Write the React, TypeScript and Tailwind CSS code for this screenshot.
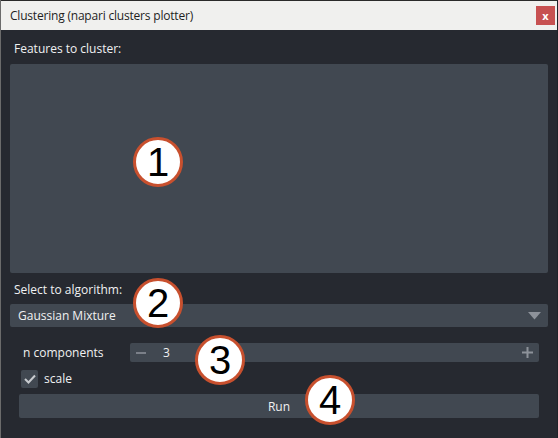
const font = "font-['Segoe_UI','Open_Sans','Noto_Sans',sans-serif]";

function Marker({ n, className }: { n: number; className: string }) {
  return (
    <div
      className={`absolute flex h-[50px] w-[50px] items-center justify-center rounded-full border-[3px] border-[#c8502e] bg-white text-[40px] leading-none text-black font-['Liberation_Sans',sans-serif] ${className}`}
    >
      {n}
    </div>
  );
}

export default function App() {
  return (
    <div className={`relative h-[438px] w-[558px] overflow-hidden bg-[#1f2228] ${font}`}>
      <div className="flex h-[438px] w-[557px] flex-col border-l border-[#6b6b6b]">
        <div className="flex h-[30px] items-center justify-between border-t border-[#2a2a2a] bg-[#f0f0ee] pl-[9px] pr-[2px]">
          <span className="text-[12px] tracking-[-0.2px] text-[#1e1e1e]">Clustering (napari clusters plotter)</span>
          <div className="flex h-[19px] w-[19px] items-center justify-center bg-[#c75151] text-[11px] font-bold leading-none text-white">
            x
          </div>
        </div>
        <div className="flex flex-1 flex-col bg-[#262930] px-[9px] text-[12px] text-[#f0f1f2]">
          <div className="pl-[4px] pt-[11px] leading-[16px]">Features to cluster:</div>
          <div className="mt-[7px] h-[209px] rounded-[2px] bg-[#414851]" />
          <div className="mt-[9px] pl-[4px] leading-[16px]">Select to algorithm:</div>
          <div className="mt-[6px] flex h-[23px] items-center justify-between rounded-[2px] bg-[#414851] pl-[8px] pr-[7px]">
            <span>Gaussian Mixture</span>
            <svg width="13" height="8" viewBox="0 0 13 8">
              <path d="M0 0 H13 L6.5 7.5 Z" fill="#8d929a" />
            </svg>
          </div>
          <div className="mt-[16px] flex h-[19px] items-center pl-[13px] pr-[9px]">
            <span className="w-[107px]">n components</span>
            <div className="flex h-[19px] flex-1 items-center rounded-[2px] bg-[#414851] px-[6px]">
              <span className="h-[2px] w-[10px] bg-[#7b8089]" />
              <span className="ml-[17px]">3</span>
              <svg className="ml-auto" width="11" height="11" viewBox="0 0 11 11">
                <path d="M0 5.5 H11 M5.5 0 V11" stroke="#8d929a" strokeWidth="2" />
              </svg>
            </div>
          </div>
          <div className="mt-[8px] flex items-center pl-[11px]">
            <div className="flex h-[18px] w-[17px] items-center justify-center rounded-[2px] bg-[#414851]">
              <svg width="12" height="10" viewBox="0 0 12 10">
                <path d="M1 5 L4.5 8.5 L11 1.5" stroke="#c8cbcf" strokeWidth="2" fill="none" />
              </svg>
            </div>
            <span className="ml-[6px]">scale</span>
          </div>
          <div className="ml-[9px] mr-[9px] mt-[6px] flex h-[24px] items-center justify-center rounded-[2px] bg-[#414851] pt-[2px]">
            Run
          </div>
        </div>
      </div>
      <Marker n={1} className="left-[133px] top-[137px]" />
      <Marker n={2} className="left-[133px] top-[278px]" />
      <Marker n={3} className="left-[195px] top-[335px]" />
      <Marker n={4} className="left-[305px] top-[375px]" />
    </div>
  );
}
